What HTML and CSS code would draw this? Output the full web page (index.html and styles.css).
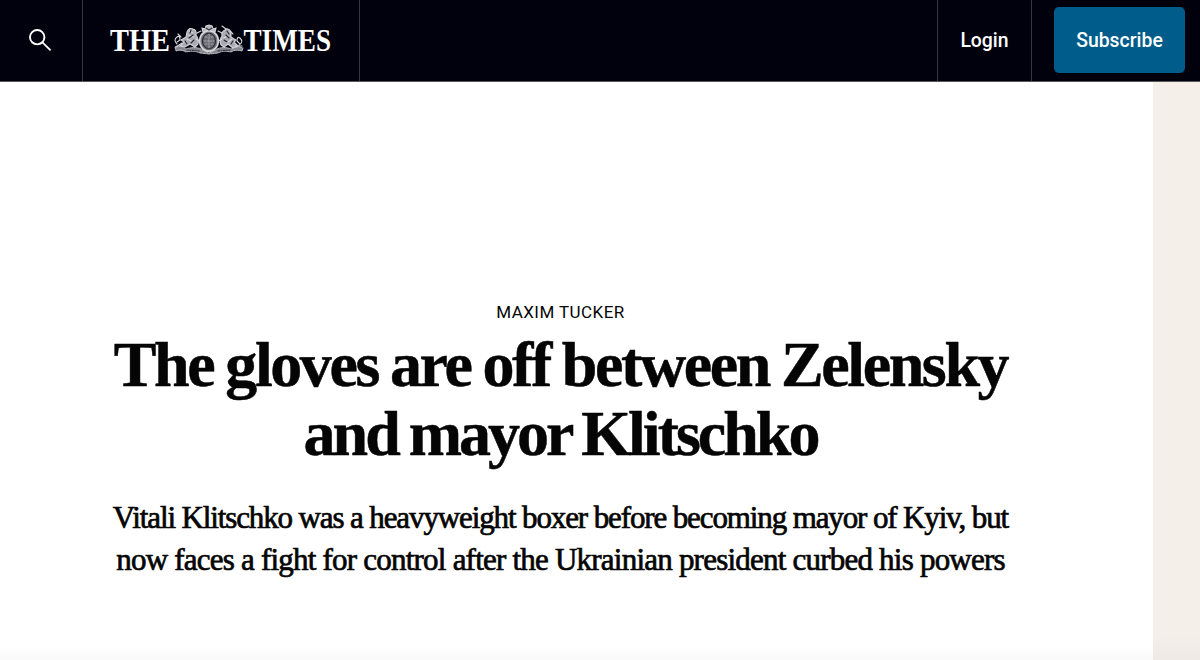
FILE: index.html
```html
<!DOCTYPE html>
<html lang="en">
<head>
    <meta charset="UTF-8">
    <meta name="viewport" content="width=device-width, initial-scale=1.0">
    <title>The gloves are off between Zelensky and mayor Klitschko | The Times</title>
    <link rel="stylesheet" href="styles.css">
</head>
<body>
    <header class="site-header">
        <button class="search-btn" aria-label="Search">
            <svg width="24" height="24" viewBox="0 0 24 24" fill="none" stroke="#fff" stroke-width="1.9">
                <circle cx="9.2" cy="9.2" r="7.2"/>
                <path d="M14.4 14.4 L22.6 22.4"/>
            </svg>
        </button>
        <a class="logo" href="#" aria-label="The Times">
            <svg width="246" height="40" viewBox="0 0 246 40">
                <text class="logo-text" x="2" y="30" textLength="60" lengthAdjust="spacingAndGlyphs">THE</text>
                <text class="logo-text" x="135.5" y="30" textLength="87.5" lengthAdjust="spacingAndGlyphs">TIMES</text>
                <!-- royal coat of arms -->
                <g transform="translate(65 3)" fill="none" stroke="#d5d5da" stroke-width="1.1" stroke-linecap="round">
                    <!-- scroll -->
                    <path d="M2 23 Q8 20 13 25 Q22 22 28 25 L36 29 L44 25 Q51 22 58 25 Q64 21 70 24 L69 27 Q62 25 58 28 Q50 26 45 29 L36 30 L27 29 Q21 26 13 28 Q8 25 3 27 Z" fill="#85858e" stroke-width=".8" stroke-dasharray="3 1"/>
                    <path d="M14 26 L27 27 M45 27 L58 26" stroke="#33333f" stroke-dasharray="1.4 1.3"/>
                    <!-- lion -->
                    <path d="M14 8 Q16 3 20 5 Q24 6 23 11 Q26 15 25 20 L22 23 L17 20 L12 23 L7 22 L11 18 L8 16 L13 13 Z" fill="#aaaab2"/>
                    <path d="M16 7 L20 9 M15 11 L21 13 M14 15 L20 18 M24 9 L28 7 M23 15 L28 18 M4 20 Q0 16 4 13 Q7 11 7 16 L4 18 M8 13 L5 10 M3 23 L9 19"/>
                    <path d="M18 6 L17 9 M20 11 L16 14 M21 16 L18 19 M12 17 L14 20" stroke="#22222d"/>
                    <!-- unicorn -->
                    <path d="M58 8 Q55 3 52 6 Q48 8 49 12 Q46 16 48 21 L51 23 L55 20 L60 24 L65 22 L61 18 L63 16 L58 13 Z" fill="#aaaab2"/>
                    <path d="M53 5 L49 2 M57 7 L60 10 M55 12 L50 14 M59 15 L54 19 M49 9 L45 7 M49 15 L44 18 M66 21 Q71 18 67 14 Q64 12 64 17 L67 20 M62 22 L69 22"/>
                    <path d="M54 7 L56 10 M53 11 L56 14 M51 16 L54 18 M60 17 L58 20" stroke="#22222d"/>
                    <!-- crown and shield -->
                    <path d="M30 8 L29 4 L32 5 L33 2 L36 1 L39 2 L40 5 L43 4 L42 8 Z" fill="#b4b4ba"/>
                    <ellipse cx="36" cy="17" rx="9.3" ry="10.2" fill="#777780" stroke-width="1.8" stroke-dasharray="2 .8"/>
                    <ellipse cx="36" cy="17" rx="6.5" ry="7.8" fill="#696972" stroke="#262632"/>
                    <path d="M36 10 V24 M31 17 H41 M32 13 H34 M38 13 H40 M32 20 H34 M38 20 H40" stroke="#b2b2b8" stroke-width=".8" stroke-dasharray="2 1"/>
                    <path d="M33 4 L36 6 L39 4" stroke="#33333e"/>
                </g>
            </svg>
        </a>
        <nav class="account-nav">
            <a class="login" href="#">Login</a>
            <div class="subscribe-wrap">
                <a class="subscribe" href="#">Subscribe</a>
            </div>
        </nav>
    </header>
    <main class="page">
        <article class="article">
            <p class="byline">MAXIM TUCKER</p>
            <h1 class="headline"><span class="h-first">The gloves are off between Zelensky</span><br><span class="h-second">and mayor Klitschko</span></h1>
            <p class="standfirst"><span class="s-first">Vitali Klitschko was a heavyweight boxer before becoming mayor of Kyiv, but</span><br><span class="s-second">now faces a fight for control after the Ukrainian president curbed his powers</span></p>
        </article>
        <aside class="side-rail"></aside>
    </main>
</body>
</html>
```
FILE: styles.css
```css
* {
    box-sizing: border-box;
}
body {
    margin: 0;
    height: 660px;
    overflow: hidden;
    display: flex;
    flex-direction: column;
    background-color: #fff;
    color: #050505;
    font-family: Roboto, "Liberation Sans", sans-serif;
}
a {
    color: #fff;
    text-decoration: none;
}
.site-header {
    display: flex;
    height: 82px;
    flex: none;
    background-color: #01000d;
    border-bottom: 1px solid #55555a;
}
.search-btn {
    width: 83px;
    padding: 0 0 1px 28px;
    border: none;
    border-right: 1px solid #36363d;
    background: none;
    display: flex;
    align-items: center;
}
.logo {
    width: 277px;
    padding-left: 25px;
    border-right: 1px solid #36363d;
    display: flex;
    align-items: center;
}
.logo-text {
    font-family: "Liberation Serif", serif;
    font-weight: bold;
    font-size: 32px;
    fill: #fff;
}
.account-nav {
    display: flex;
    margin-left: auto;
    font-size: 19.4px;
    font-weight: 500;
}
.login {
    width: 95px;
    border-left: 1px solid #36363d;
    border-right: 1px solid #36363d;
    display: flex;
    align-items: center;
    justify-content: center;
}
.subscribe-wrap {
    padding: 7px 15px 8px 22px;
}
.subscribe {
    width: 131px;
    height: 66px;
    border-radius: 5px;
    background-color: #005c8a;
    display: flex;
    align-items: center;
    justify-content: center;
}
.page {
    flex: 1;
    display: flex;
    background: linear-gradient(to top, #f9f9f9, #fff 14px);
}
.article {
    flex: 1;
    padding: 219px 32px 0 0;
    text-align: center;
    white-space: nowrap;
}
.byline {
    margin: 0;
    font-size: 17px;
    line-height: 22px;
    letter-spacing: 0.43px;
}
.headline {
    margin: 7px 0 0;
    font-family: "Liberation Serif", serif;
    font-size: 64px;
    line-height: 69px;
    font-weight: bold;
    -webkit-text-stroke: 0.5px #050505;
}
.standfirst {
    margin: 29px 0 0;
    font-family: "Liberation Serif", serif;
    font-size: 31px;
    line-height: 41.5px;
    -webkit-text-stroke: 0.7px #050505;
}
.h-first {
    letter-spacing: -2.4px;
    word-spacing: -1.6px;
}
.h-second {
    letter-spacing: -3px;
    word-spacing: -2px;
}
.s-first {
    letter-spacing: -1.12px;
}
.s-second {
    letter-spacing: -0.78px;
}
.side-rail {
    width: 47px;
    background: linear-gradient(to top, #efe9e6, #f5efea 24px);
}
```
